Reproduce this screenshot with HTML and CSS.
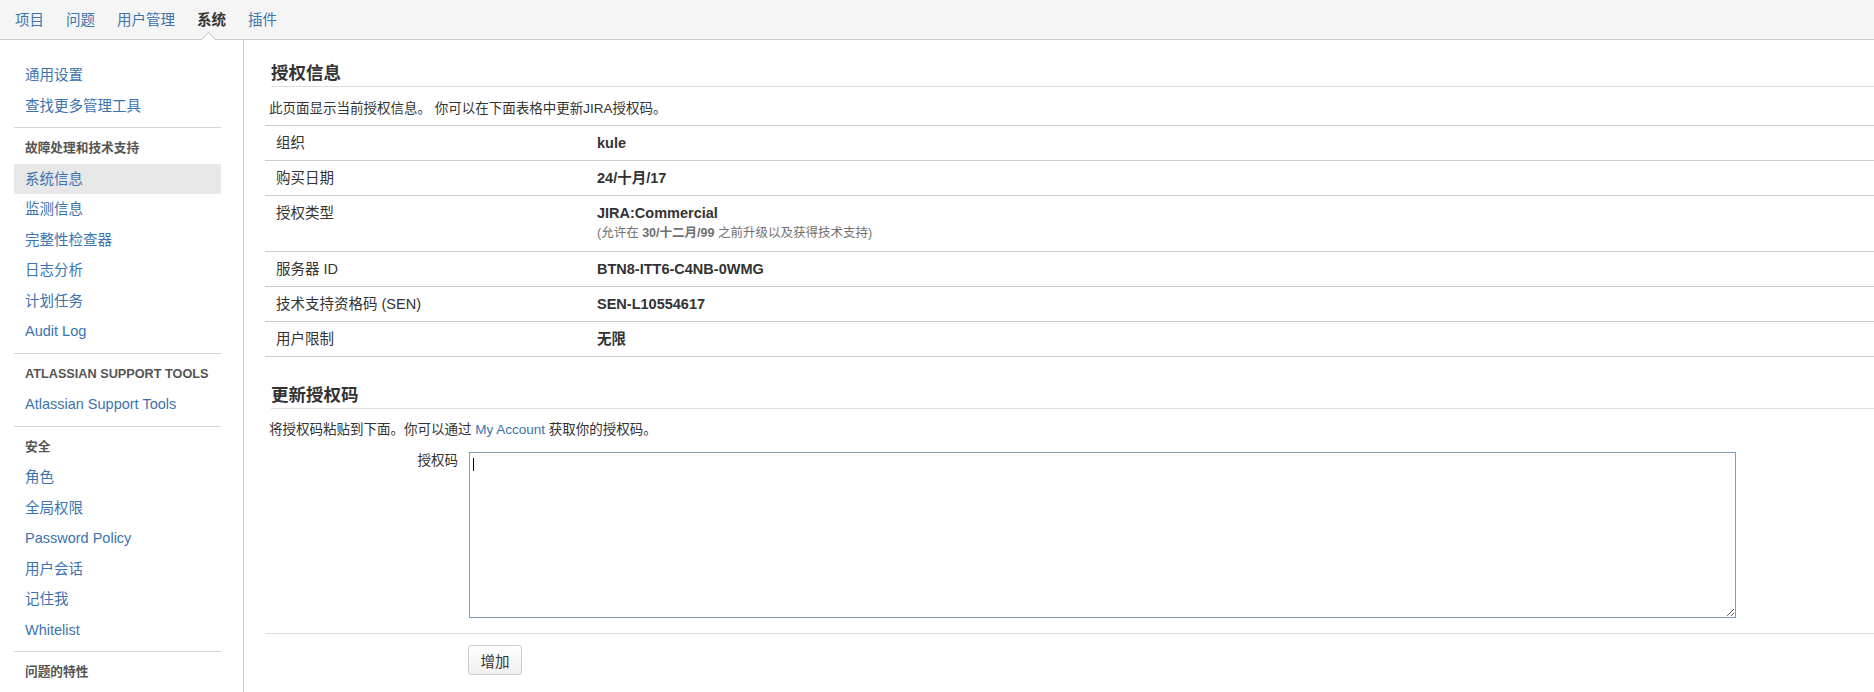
FILE: index.html
```html
<!DOCTYPE html>
<html lang="zh-CN">
<head>
<meta charset="utf-8">
<title>授权信息</title>
<link rel="stylesheet" href="styles.css">
</head>
<body>
<header class="topnav">
  <a class="nav-item" href="#">项目</a>
  <a class="nav-item" href="#">问题</a>
  <a class="nav-item" href="#">用户管理</a>
  <a class="nav-item active" href="#">系统</a>
  <a class="nav-item" href="#">插件</a>
</header>
<div class="layout">
  <aside class="sidebar">
    <nav class="side-group">
      <a class="side-link" href="#">通用设置</a>
      <a class="side-link" href="#">查找更多管理工具</a>
    </nav>
    <div class="sep"></div>
    <nav class="side-group">
      <div class="side-heading">故障处理和技术支持</div>
      <a class="side-link selected" href="#">系统信息</a>
      <a class="side-link" href="#">监测信息</a>
      <a class="side-link" href="#">完整性检查器</a>
      <a class="side-link" href="#">日志分析</a>
      <a class="side-link" href="#">计划任务</a>
      <a class="side-link" href="#">Audit Log</a>
    </nav>
    <div class="sep"></div>
    <nav class="side-group">
      <div class="side-heading">ATLASSIAN SUPPORT TOOLS</div>
      <a class="side-link" href="#">Atlassian Support Tools</a>
    </nav>
    <div class="sep"></div>
    <nav class="side-group">
      <div class="side-heading">安全</div>
      <a class="side-link" href="#">角色</a>
      <a class="side-link" href="#">全局权限</a>
      <a class="side-link" href="#">Password Policy</a>
      <a class="side-link" href="#">用户会话</a>
      <a class="side-link" href="#">记住我</a>
      <a class="side-link" href="#">Whitelist</a>
    </nav>
    <div class="sep"></div>
    <nav class="side-group">
      <div class="side-heading">问题的特性</div>
    </nav>
  </aside>
  <main class="content">
    <h2 class="section-title">授权信息</h2>
    <p class="desc">此页面显示当前授权信息。 你可以在下面表格中更新JIRA授权码。</p>
    <table class="info-table">
      <tr><td class="label">组织</td><td class="value">kule</td></tr>
      <tr><td class="label">购买日期</td><td class="value">24/十月/17</td></tr>
      <tr><td class="label">授权类型</td><td class="value">JIRA:Commercial<div class="note">(允许在 <strong>30/十二月/99</strong> 之前升级以及获得技术支持)</div></td></tr>
      <tr><td class="label">服务器 ID</td><td class="value">BTN8-ITT6-C4NB-0WMG</td></tr>
      <tr><td class="label">技术支持资格码 (SEN)</td><td class="value">SEN-L10554617</td></tr>
      <tr><td class="label">用户限制</td><td class="value">无限</td></tr>
    </table>

    <h2 class="section-title second">更新授权码</h2>
    <p class="desc desc2">将授权码粘贴到下面。你可以通过 <a href="#">My Account</a> 获取你的授权码。</p>
    <div class="field">
      <label class="field-label" for="lic">授权码</label>
      <div class="textarea-wrap">
        <textarea id="lic" class="license"></textarea>
        <span class="caret"></span>
      </div>
    </div>
    <div class="buttons">
      <button class="btn" type="button">增加</button>
    </div>
  </main>
</div>
</body>
</html>
```
FILE: styles.css
```css
* { box-sizing: border-box; }

html, body { height: 100%; }

body {
  margin: 0;
  font-family: "Liberation Sans", "Noto Sans CJK SC", sans-serif;
  font-size: 14.5px;
  color: #333;
  background: #fff;
  overflow: hidden;
}

a { color: #3b73af; text-decoration: none; }

/* top navigation */
.topnav {
  height: 40px;
  background: #f5f5f5;
  border-bottom: 1px solid #ccc;
  display: flex;
  align-items: center;
  gap: 22px;
  padding-left: 15px;
}

.nav-item {
  position: relative;
  line-height: 20px;
}

.nav-item.active {
  color: #333;
  font-weight: bold;
}

.nav-item.active::after {
  content: "";
  position: absolute;
  left: 6px;
  bottom: -15px;
  width: 10px;
  height: 10px;
  background: #fff;
  border-left: 1px solid #ccc;
  border-top: 1px solid #ccc;
  transform: rotate(45deg);
}

/* layout */
.layout {
  display: flex;
  min-height: calc(100vh - 40px);
}

.sidebar {
  width: 244px;
  flex: none;
  border-right: 1px solid #ccc;
  padding: 20px 22px 0 14px;
}

.side-group {
  display: flex;
  flex-direction: column;
}

.side-link {
  display: block;
  height: 30.5px;
  line-height: 30.5px;
  padding-left: 11px;
  white-space: nowrap;
}

.side-link.selected {
  background: #e8e8e8;
}

.side-heading {
  height: 30.5px;
  line-height: 30.5px;
  margin-top: 5px;
  padding-left: 11px;
  font-size: 12.7px;
  font-weight: bold;
  color: #555;
  white-space: nowrap;
}

.sep {
  height: 0;
  border-top: 1px solid #d5d5d5;
  margin-top: 6px;
}

/* main content */
.content {
  flex: 1;
  min-width: 0;
  padding: 21px 0 0 21px;
}

.section-title {
  margin: 0 0 0 6px;
  font-size: 17.5px;
  line-height: 24px;
  padding-bottom: 1px;
  border-bottom: 1px solid #ddd;
  font-weight: bold;
  color: #333;
}

.section-title.second {
  margin-top: 26px;
}

.desc {
  margin: 12px 0 6px 4px;
  font-size: 13.5px;
  line-height: 20px;
}

.desc2 {
  margin: 11px 0 0 4px;
}

.info-table {
  width: 100%;
  border-collapse: collapse;
  border-top: 1px solid #ccc;
}

.info-table td {
  border-bottom: 1px solid #ccc;
  padding: 7px 10px;
  line-height: 20px;
  vertical-align: top;
}

.info-table td.label {
  width: 322px;
  padding-left: 11px;
}

.info-table td.value {
  font-weight: bold;
}

.note {
  font-weight: normal;
  font-size: 12.5px;
  line-height: 21px;
  color: #707070;
}

.note strong {
  font-weight: bold;
}

/* form */
.field {
  display: flex;
  align-items: flex-start;
  margin-top: 12px;
}

.field-label {
  width: 193px;
  margin-right: 11px;
  text-align: right;
  font-size: 13.5px;
  line-height: 18px;
}

.textarea-wrap {
  position: relative;
}

.license {
  display: block;
  width: 1267px;
  height: 166px;
  margin: 0;
  padding: 2px;
  border: 1px solid #7f9db9;
  background: #fff;
  font-family: inherit;
  font-size: 14px;
  outline: none;
}

.caret {
  position: absolute;
  left: 4px;
  top: 6px;
  width: 1px;
  height: 13px;
  background: #000;
}

.buttons {
  margin-top: 15px;
  border-top: 1px solid #ddd;
  padding: 11px 0 0 203px;
}

.btn {
  height: 30px;
  width: 54px;
  padding: 0;
  border: 1px solid #ccc;
  border-radius: 3px;
  background: linear-gradient(#ffffff, #f0f0f0);
  font-family: inherit;
  font-size: 14.5px;
  color: #333;
}
```
